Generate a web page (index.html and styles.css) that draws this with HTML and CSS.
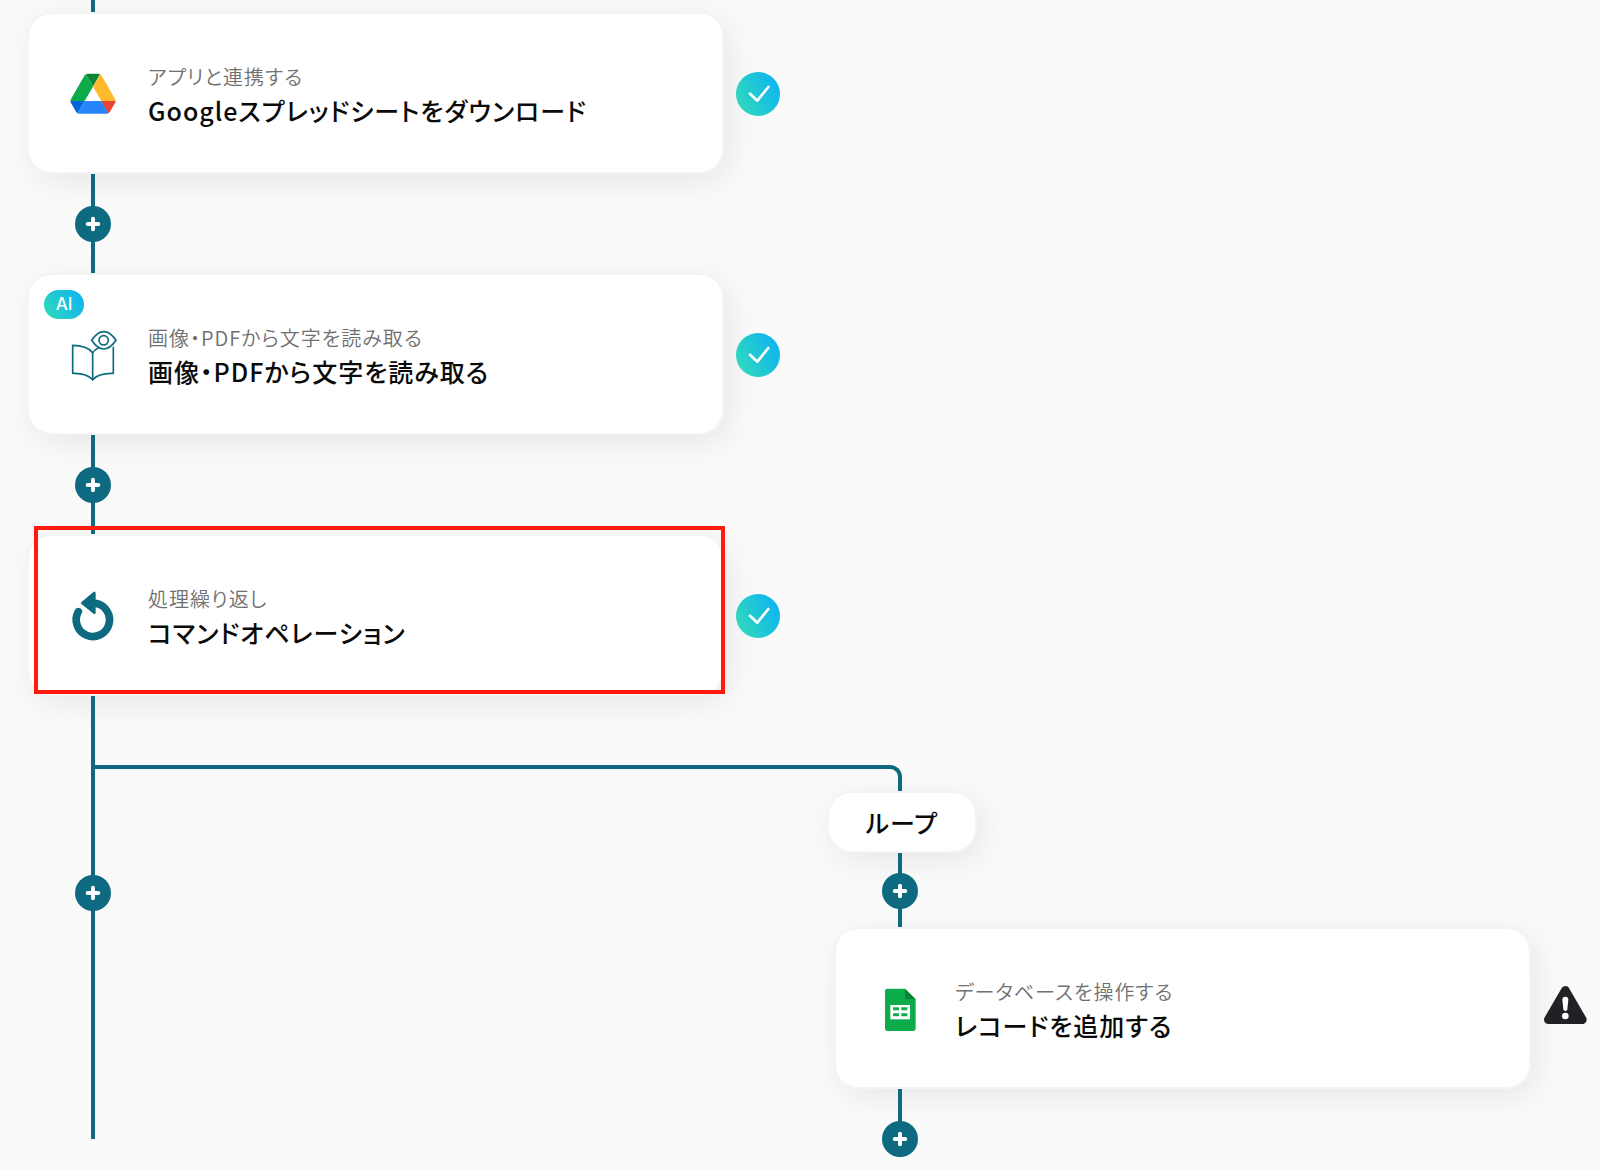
FILE: index.html
```html
<!DOCTYPE html>
<html lang="ja">
<head>
<meta charset="utf-8">
<meta name="viewport" content="width=device-width, initial-scale=1">
<title>フローボット</title>
<link rel="stylesheet" href="styles.css">
</head>
<body>
<svg class="defs" width="0" height="0" aria-hidden="true">
  <defs>
    <linearGradient id="done" x1="0" y1="0.75" x2="1" y2="0.25">
      <stop offset="0" stop-color="#31dabb"/>
      <stop offset="0.95" stop-color="#0fb5ef"/>
    </linearGradient>
    <symbol id="plus" viewBox="0 0 36 36">
      <path d="M18 12.700V23.300M12.700 18H23.300" fill="none" stroke="#fff" stroke-width="4" stroke-linecap="round"/>
    </symbol>
    <symbol id="check" viewBox="0 0 132 132">
      <circle cx="66" cy="66" r="66" fill="url(#done)"/>
      <path d="M42 65 64 86 97 45" fill="none" stroke="#fff" stroke-width="8" stroke-linecap="round" stroke-linejoin="round"/>
    </symbol>
  </defs>
</svg>

<main class="flow">
  <section class="lane lane-main">
    <div class="step">
      <article class="card">
        <svg class="icon" viewBox="-2.900 -9 93.100 93.100" aria-hidden="true">
          <path d="m6.600 66.850 3.850 6.650c.8 1.400 1.950 2.500 3.300 3.300l13.750-23.800h-27.500c0 1.550.4 3.100 1.200 4.500z" fill="#0066da"/>
          <path d="m43.650 25-13.750-23.800c-1.350.8-2.500 1.900-3.300 3.300l-25.400 44a9.060 9.060 0 0 0-1.200 4.500h27.500z" fill="#0dac4b"/>
          <path d="m73.550 76.800c1.350-.8 2.500-1.900 3.300-3.300l1.600-2.750 7.650-13.250c.8-1.400 1.200-2.950 1.200-4.500h-27.500l5.850 11.500z" fill="#ea4335"/>
          <path d="m43.650 25 13.750-23.800c-1.350-.8-2.900-1.200-4.500-1.200h-18.500c-1.600 0-3.150.45-4.500 1.200z" fill="#0a8435"/>
          <path d="m59.800 53h-32.300l-13.750 23.800c1.350.8 2.900 1.200 4.500 1.200h50.800c1.600 0 3.150-.45 4.500-1.200z" fill="#2684fc"/>
          <path d="m73.400 26.500-12.700-22c-.8-1.400-1.950-2.500-3.300-3.300l-13.750 23.800 16.150 28h27.450c0-1.550-.4-3.100-1.200-4.500z" fill="#ffba2c"/>
        </svg>
        <div class="text">
          <p class="kind">アプリと連携する</p>
          <h2 class="name">Googleスプレッドシートをダウンロード</h2>
        </div>
      </article>
      <svg class="status" role="img" aria-label="設定済み"><use href="#check"/></svg>
    </div>

    <div class="link link-step">
      <button class="add" type="button" aria-label="追加"><svg><use href="#plus"/></svg></button>
    </div>

    <div class="step">
      <article class="card">
        <span class="badge">AI</span>
        <svg class="icon" viewBox="117 150 144 144" aria-hidden="true">
          <g fill="none" stroke="#0d6a80" stroke-width="5" stroke-linecap="round" stroke-linejoin="round">
            <path d="M188 218C176 203 155 196 128 196V280C155 279 175 284 188 299C201 284 222 279 250 280V202"/>
            <path d="M188 299V218C192 211 198 207 206 203"/>
            <path d="M185 181C197 163 208 155 221 155S246 163 258 181C246 199 234 207 221 207S197 199 185 181Z"/>
            <circle cx="221" cy="181" r="14"/>
          </g>
        </svg>
        <div class="text">
          <p class="kind">画像・PDFから文字を読み取る</p>
          <h2 class="name">画像・PDFから文字を読み取る</h2>
        </div>
      </article>
      <svg class="status" role="img" aria-label="設定済み"><use href="#check"/></svg>
    </div>

    <div class="link link-step">
      <button class="add" type="button" aria-label="追加"><svg><use href="#plus"/></svg></button>
    </div>

    <div class="step">
      <article class="card card-marked">
        <svg class="icon" viewBox="147 243 144 144" aria-hidden="true">
          <path d="M175 305A50 50 0 1 0 226 280" fill="none" stroke="#0d6a80" stroke-width="23" stroke-linecap="round"/>
          <path d="M187 279 223 249V308Z" fill="#0d6a80" stroke="#0d6a80" stroke-width="8" stroke-linejoin="round"/>
        </svg>
        <div class="text">
          <p class="kind">処理繰り返し</p>
          <h2 class="name">コマンドオペレーション</h2>
        </div>
      </article>
      <svg class="status" role="img" aria-label="設定済み"><use href="#check"/></svg>
    </div>
  </section>

  <div class="branch"></div>

  <div class="link link-tail">
    <button class="add" type="button" aria-label="追加"><svg><use href="#plus"/></svg></button>
  </div>

  <section class="lane lane-loop">
    <h2 class="loop">ループ</h2>

    <div class="link link-loop">
      <button class="add" type="button" aria-label="追加"><svg><use href="#plus"/></svg></button>
    </div>

    <div class="step">
      <article class="card">
        <svg class="icon" viewBox="168 222 144 144" aria-hidden="true">
          <path d="M202 236H255L287 268V355Q287 363 279 363H203Q195 363 195 355V243Q195 236 202 236Z" fill="#0dac4b"/>
          <path d="M255 236 287 268H255Z" fill="#0a8435"/>
          <path d="M211 285H270V328H211Z" fill="#fff"/>
          <path d="M219 292H237V301H219ZM244 292H262V301H244ZM219 310H237V319H219ZM244 310H262V319H244Z" fill="#0dac4b"/>
        </svg>
        <div class="text">
          <p class="kind">データベースを操作する</p>
          <h2 class="name">レコードを追加する</h2>
        </div>
      </article>
      <svg class="status" viewBox="189 261 132 132" role="img" aria-label="未設定の項目があります">
        <path d="M256 271 307 359H205Z" fill="#202124" stroke="#202124" stroke-width="26" stroke-linejoin="round"/>
        <path d="M247 299Q247 290 256 290T265 299L262 328Q261 333 256 333T250 328Z" fill="#fff"/>
        <circle cx="256" cy="348" r="10" fill="#fff"/>
      </svg>
    </div>

    <div class="link link-end">
      <button class="add" type="button" aria-label="追加"><svg><use href="#plus"/></svg></button>
    </div>
  </section>
</main>
</body>
</html>
```

FILE: styles.css
```css
* {
  box-sizing: border-box;
}

body {
  margin: 0;
  background: #fafafa;
  color: #0a0a0a;
  font-family: "Noto Sans CJK JP", sans-serif;
  font-feature-settings: "palt";
}

.defs {
  position: absolute;
}

/* two lanes of equal width; the branch line runs from one to the other */
.flow {
  display: grid;
  grid-template-columns: 1fr 1fr;
  column-gap: 54px;
  padding: 0 13px 12px 27px;
}

.lane {
  display: flex;
  flex-direction: column;
}

.lane-main {
  grid-column: 1;
  grid-row: 1;
  padding-top: 12px;
  background: linear-gradient(#0d6a80, #0d6a80) 64px 0 / 4px 12px no-repeat;
}

.step {
  display: flex;
  align-items: center;
  gap: 12px;
}

.card {
  position: relative;
  flex: 1;
  display: flex;
  align-items: center;
  gap: 31px;
  min-height: 162px;
  padding: 0 40px;
  background: #fff;
  background-clip: padding-box;
  border: 2px solid #f4f4f4;
  border-radius: 24px;
  box-shadow: 6px 8px 32px rgba(0, 0, 0, 0.08);
}

.card-marked::after {
  content: "";
  position: absolute;
  z-index: 2;
  top: -10px;
  right: -3px;
  bottom: 0;
  left: 5px;
  border: 4px solid #ff1a0d;
}

.icon {
  flex: none;
  width: 48px;
  height: 48px;
  overflow: visible;
}

.text {
  padding-top: 6px;
}

.kind,
.name,
.loop {
  margin: 0;
  letter-spacing: 1px;
}

.kind {
  font-size: 20px;
  font-weight: 350;
  line-height: 28px;
  color: #707070;
}

.name {
  font-size: 25px;
  font-weight: 500;
  line-height: 38px;
}

.badge {
  position: absolute;
  top: 15px;
  left: 15px;
  width: 40px;
  border-radius: 15px;
  background: linear-gradient(60deg, #31dabb, #0fb5ef 90%);
  color: #fff;
  font: 500 17px/29px Inter, sans-serif;
  text-align: center;
}

.status {
  position: relative;
  z-index: 1;
  flex: none;
  width: 44px;
  height: 44px;
  margin-top: 2px;
  overflow: visible;
}

.link {
  position: relative;
  z-index: 1;
  display: flex;
  width: 36px;
  margin-left: 48px;
  background: linear-gradient(#0d6a80, #0d6a80) 16px 0 / 4px 100% no-repeat;
}

.add {
  width: 36px;
  height: 36px;
  padding: 0;
  border: 0;
  border-radius: 50%;
  background: #0d6a80;
  cursor: pointer;
}

.add svg {
  display: block;
  width: 36px;
  height: 36px;
}

.link-step {
  padding: 32px 0 31px;
}

.link-loop {
  padding: 20px 0 18px;
}

.link-end {
  padding-top: 32px;
}

.link-tail {
  grid-column: 1;
  grid-row: 2 / 4;
  align-self: start;
  padding: 179px 0 228px;
}

.branch {
  position: relative;
  z-index: 1;
  grid-column: 1 / -1;
  grid-row: 2;
  width: calc(50% + 31px);
  height: 26px;
  margin: 69px 0 0 64px;
  border: solid #0d6a80;
  border-width: 4px 4px 0 0;
  border-top-right-radius: 12px;
}

.lane-loop {
  grid-column: 2;
  grid-row: 3;
}

.loop {
  align-self: flex-start;
  min-width: 150px;
  margin-left: -7px;
  padding: 10px 24px;
  background: #fff;
  background-clip: padding-box;
  border: 2px solid #f4f4f4;
  border-radius: 24px;
  box-shadow: 6px 8px 32px rgba(0, 0, 0, 0.08);
  font-size: 25px;
  font-weight: 500;
  line-height: 38px;
  text-align: center;
}
```
